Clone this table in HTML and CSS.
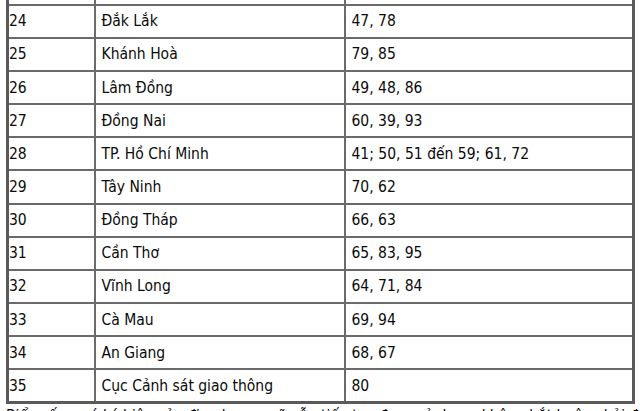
FILE: index.html
```html
<!DOCTYPE html>
<html lang="vi">
<head>
<meta charset="utf-8">
<link rel="stylesheet" href="styles.css">
</head>
<body>
<div class="viewport">
<table class="plates">
<colgroup><col class="c1"><col class="c2"><col class="c3"></colgroup>
<tbody>
<tr class="prev"><td class="num"></td><td></td><td></td></tr>
<tr><td class="num">24</td><td>Đắk Lắk</td><td>47, 78</td></tr>
<tr><td class="num">25</td><td>Khánh Hoà</td><td>79, 85</td></tr>
<tr><td class="num">26</td><td>Lâm Đồng</td><td>49, 48, 86</td></tr>
<tr><td class="num">27</td><td>Đồng Nai</td><td>60, 39, 93</td></tr>
<tr><td class="num">28</td><td>TP. Hồ Chí Minh</td><td>41; 50, 51 đến 59; 61, 72</td></tr>
<tr><td class="num">29</td><td>Tây Ninh</td><td>70, 62</td></tr>
<tr><td class="num">30</td><td>Đồng Tháp</td><td>66, 63</td></tr>
<tr><td class="num">31</td><td>Cần Thơ</td><td>65, 83, 95</td></tr>
<tr><td class="num">32</td><td>Vĩnh Long</td><td>64, 71, 84</td></tr>
<tr><td class="num">33</td><td>Cà Mau</td><td>69, 94</td></tr>
<tr><td class="num">34</td><td>An Giang</td><td>68, 67</td></tr>
<tr><td class="num">35</td><td>Cục Cảnh sát giao thông</td><td>80</td></tr>
</tbody>
</table>
<p class="note">Biển số xe có ký hiệu của địa phương cũ vẫn tiếp tục được sử dụng, không bắt buộc phải đổi</p>
</div>
</body>
</html>
```
FILE: styles.css
```css
html, body {
  margin: 0;
  padding: 0;
  background: #ffffff;
}
.viewport {
  height: 411px;
  overflow: hidden;
  padding-left: 6px;
}
.plates {
  margin-top: -30px;
  border-collapse: collapse;
  width: 626px;
  table-layout: fixed;
  font-family: "DejaVu Sans", Verdana, sans-serif;
  font-stretch: condensed;
  font-size: 15.5px;
  color: #0a0a0a;
  border: 3px solid #5a5a5a;
}
.c1 { width: 87px; }
.c2 { width: 250px; }
.c3 { width: 289px; }
.plates td {
  border: 2px solid #6a6a6a;
  height: 33.17px;
  padding: 0 6px;
  box-sizing: border-box;
  vertical-align: middle;
  white-space: nowrap;
}
.plates td.num {
  padding-left: 0;
}
.note {
  margin: 3px 0 0 0;
  font-family: "DejaVu Sans", Verdana, sans-serif;
  font-stretch: condensed;
  font-size: 15.5px;
  color: #0a0a0a;
  white-space: nowrap;
}
```
